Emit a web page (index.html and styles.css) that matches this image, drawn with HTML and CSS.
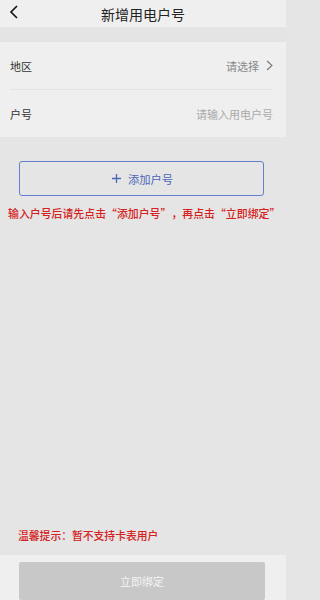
FILE: index.html
```html
<!DOCTYPE html>
<html lang="zh">
<head>
<meta charset="utf-8">
<link rel="stylesheet" href="styles.css">
</head>
<body>
<div class="page">
  <header class="topbar">
    <svg class="back" width="10" height="14" viewBox="0 0 10 14"><path d="M8 1 L2 7 L8 13" fill="none" stroke="#111" stroke-width="1.6"/></svg>
    <div class="title">新增用电户号</div>
  </header>
  <div class="band"></div>
  <section class="form">
    <div class="row">
      <span class="label">地区</span>
      <span class="value">请选择
        <svg class="chev" width="7" height="11" viewBox="0 0 7 11"><path d="M1 1 L6 5.5 L1 10" fill="none" stroke="#777" stroke-width="1.1"/></svg>
      </span>
    </div>
    <div class="divider"></div>
    <div class="row">
      <span class="label">户号</span>
      <span class="placeholder">请输入用电户号</span>
    </div>
  </section>
  <main class="content">
    <button class="add-btn"><svg class="plus" width="9" height="9" viewBox="0 0 9 9"><path d="M4.5 0 V9 M0 4.5 H9" stroke="#4b67b8" stroke-width="1.3"/></svg>添加户号</button>
    <p class="notice">输入户号后请先点击<span class="qo">“</span>添加户号<span class="qc">”</span>，再点击<span class="qo">“</span>立即绑定<span class="qc">”</span></p>
    <div class="spacer"></div>
    <p class="tip">温馨提示：暂不支持卡表用户</p>
  </main>
  <footer class="bottom">
    <button class="bind-btn">立即绑定</button>
  </footer>
</div>
</body>
</html>
```

FILE: styles.css
```css
* { box-sizing: border-box; }
html, body { margin: 0; padding: 0; }
body {
  font-family: "Noto Sans CJK SC", "Noto Sans", sans-serif;
  background: #e5e5e5;
}
.page {
  width: 286px;
  height: 600px;
  display: flex;
  flex-direction: column;
  overflow: hidden;
}
.topbar {
  height: 27px;
  background: #efefef;
  position: relative;
  display: flex;
  align-items: center;
  justify-content: center;
}
.back {
  position: absolute;
  left: 9px;
  top: 5px;
}
.title {
  font-size: 14px;
  color: #222;
  line-height: 20px;
}
.band {
  height: 15px;
  background: #e4e4e4;
}
.form {
  background: #efefef;
  padding: 0 13px 0 10px;
}
.row {
  height: 47px;
  display: flex;
  align-items: center;
  justify-content: space-between;
  font-size: 11px;
}
.label { color: #333; }
.value {
  color: #888;
  display: flex;
  align-items: center;
  gap: 7px;
}
.placeholder { color: #aaa; }
.divider {
  height: 1px;
  background: #e4e4e4;
}
.content {
  flex: 1;
  display: flex;
  flex-direction: column;
  padding-top: 24px;
}
.add-btn {
  margin: 0 22px 0 19px;
  height: 35px;
  border: 1px solid #6280cf;
  border-radius: 3px;
  background: transparent;
  color: #4b67b8;
  font-family: inherit;
  font-size: 11.3px;
  display: flex;
  align-items: center;
  justify-content: center;
  gap: 7px;
  padding: 0 0 0 2px;
}
.notice {
  margin: 9px 0 0 8px;
  font-size: 10.9px;
  font-weight: 500;
  color: #d42020;
  line-height: 16px;
  white-space: nowrap;
}
.qo, .qc {
  display: inline-block;
  width: 1em;
}
.qo { text-align: right; }
.qc { text-align: left; }
.spacer { flex: 1; }
.tip {
  margin: 0 0 12px 18px;
  font-size: 10.8px;
  font-weight: 500;
  color: #d42020;
  line-height: 15px;
}
.bottom {
  height: 45px;
  background: #efefef;
  padding: 7px 21px 0 19px;
}
.bind-btn {
  width: 100%;
  height: 38px;
  border: none;
  border-radius: 2px;
  background: #c8c8c8;
  color: #f4f4f4;
  font-family: inherit;
  font-size: 11px;
}
```
